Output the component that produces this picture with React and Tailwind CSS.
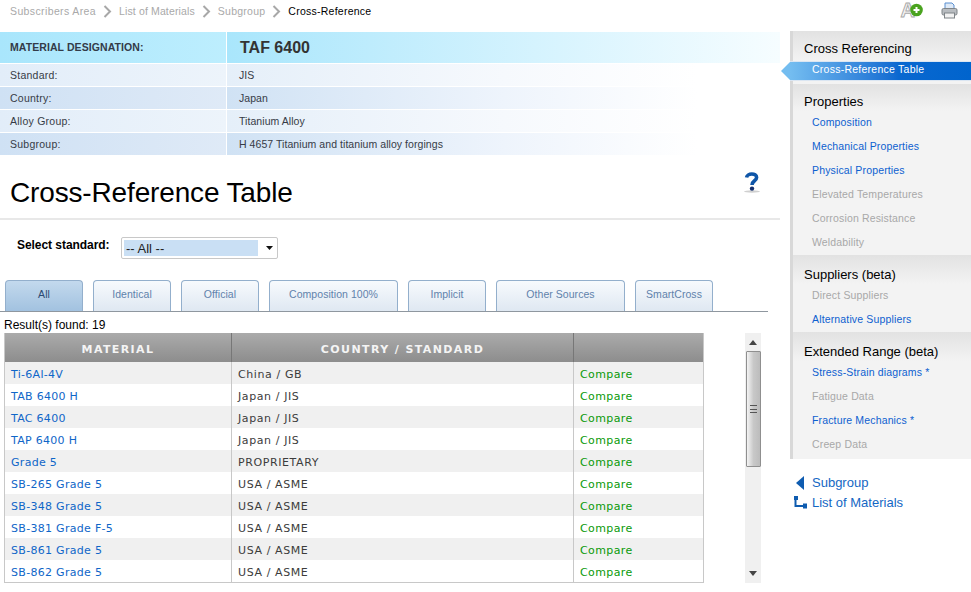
import React from "react";

const Crumb = () => (
  <svg width="9" height="13" viewBox="0 0 9 13" className="mx-[7px]">
    <path d="M1.5 1 L7 6.5 L1.5 12" fill="none" stroke="#a8a8a8" strokeWidth="2" />
  </svg>
);

const infoRows = [
  ["Standard:", "JIS", false],
  ["Country:", "Japan", true],
  ["Alloy Group:", "Titanium Alloy", false],
  ["Subgroup:", "H 4657 Titanium and titanium alloy forgings", true],
];

const tabs = [
  ["All", "w-[78px]"],
  ["Identical", "w-[78px]"],
  ["Official", "w-[78px]"],
  ["Composition 100%", "w-[129px]"],
  ["Implicit", "w-[78px]"],
  ["Other Sources", "w-[129px]"],
  ["SmartCross", "w-[78px]"],
];

const rows = [
  ["Ti-6Al-4V", "China / GB"],
  ["TAB 6400 H", "Japan / JIS"],
  ["TAC 6400", "Japan / JIS"],
  ["TAP 6400 H", "Japan / JIS"],
  ["Grade 5", "PROPRIETARY"],
  ["SB-265 Grade 5", "USA / ASME"],
  ["SB-348 Grade 5", "USA / ASME"],
  ["SB-381 Grade F-5", "USA / ASME"],
  ["SB-861 Grade 5", "USA / ASME"],
  ["SB-862 Grade 5", "USA / ASME"],
];

const NavHead = ({ children, className = "" }) => (
  <div className={`pl-[11px] text-[13px] leading-[18px] text-black bg-gradient-to-b from-[#e2e2e2] to-[#f3f3f3] ${className}`}>
    {children}
  </div>
);

const NavItem = ({ children, on }) => (
  <div className={`h-[24px] pl-[19px] text-[10.5px] leading-[22px] tracking-[0.15px] ${on ? "text-[#0d5fd0]" : "text-[#a8a8a8]"}`}>
    {children}
  </div>
);

export default function App() {
  return (
    <div className="flex h-[592px] w-[971px] overflow-hidden bg-white font-['Liberation_Sans',Arial,sans-serif]">
      <main className="w-[780px] shrink-0">
        <nav className="flex h-[32px] items-start pl-[10px] pt-[5px] text-[10.5px] leading-[13px] tracking-[0.25px] text-[#a9a9a9]">
          <span className="tracking-[0.38px]">Subscribers Area</span>
          <Crumb />
          <span className="tracking-[0.13px]">List of Materials</span>
          <Crumb />
          <span>Subgroup</span>
          <Crumb />
          <span className="text-black">Cross-Reference</span>
        </nav>

        <section>
          <div className="flex h-[32px] border-b border-white">
            <div className="w-[226px] bg-gradient-to-r from-[#a9e6fc] to-[#bdeefe] pl-[10px] text-[10.5px] font-bold leading-[30px] tracking-[0.08px] text-[#333b48]">
              MATERIAL DESIGNATION:
            </div>
            <div className="ml-px flex-1 bg-gradient-to-r from-[#a9e6fc] to-[#f6fdff] pl-[13px] text-[16px] font-bold leading-[31px] text-[#333333]">
              TAF 6400
            </div>
          </div>
          {infoRows.map(([a, b, dark]) => (
            <div key={a} className="flex h-[23px] border-b border-white text-[10.5px] leading-[22px] tracking-[0.25px] text-[#363b46]">
              <div className={`w-[226px] pl-[10px] bg-gradient-to-r ${dark ? "from-[#cfe1f4] to-[#dfeaf7]" : "from-[#e2edf9] to-[#edf4fb]"}`}>{a}</div>
              <div className={`ml-px flex-1 pl-[12px] tracking-[0.06px] bg-gradient-to-r ${dark ? "from-[#d0e2f4] via-[#eef4fc] via-50% to-white to-85%" : "from-[#e5eff9] via-[#f6f9fd] via-50% to-white to-85%"}`}>{b}</div>
            </div>
          ))}
        </section>

        <header className="flex h-[64px] items-start justify-between border-b-2 border-[#e8e8e8] pl-[10px] pr-[20px]">
          <h1 className="pt-[21px] text-[28px] font-normal leading-[32px] tracking-[-0.15px] text-black">Cross-Reference Table</h1>
          <svg width="16" height="21" viewBox="0 0 16 21" className="mt-[16px]">
            <ellipse cx="8" cy="19.5" rx="8" ry="1.2" fill="#d0d0d0" />
            <path d="M2.6 5.5 C3 1 12.6 0.6 12.6 5.6 C12.6 9 8 8.6 8 13" fill="none" stroke="#0f56a8" strokeWidth="3.6" />
            <circle cx="8" cy="16.6" r="2.2" fill="#15306e" />
          </svg>
        </header>

        <div className="flex h-[60px] items-start pl-[17px] pt-[17px]">
          <span className="w-[104px] pt-[1px] text-[12px] font-bold leading-[15px] tracking-[-0.05px] text-black">Select standard:</span>
          <div className="flex h-[22px] w-[157px] items-center rounded-[2px] border border-[#c8c8c8] pl-[2px]">
            <span className="h-[16px] w-[134px] bg-[#c9dff4] pl-[2px] text-[13px] leading-[17px] text-[#222222]">-- All --</span>
            <svg width="7" height="4" viewBox="0 0 7 4" className="ml-[8px]"><path d="M0 0 H7 L3.5 4 Z" fill="#111" /></svg>
          </div>
        </div>

        <div className="mr-[12px] flex h-[32px] items-end gap-[10px] border-b border-[#8f979f] pl-[5px]">
          {tabs.map(([t, w], i) => (
            <div
              key={t}
              className={`h-[31px] rounded-t-[4px] border border-b-0 border-[#93afcc] text-center text-[10.5px] leading-[26px] tracking-[0.05px] ${w} ${
                i === 0
                  ? "bg-gradient-to-b from-[#c3d9ed] to-[#a2c2e0] text-[#2b4a72]"
                  : "bg-gradient-to-b from-[#f7fafd] to-[#dfe8f2] text-[#5f82ab]"
              }`}
            >
              {t}
            </div>
          ))}
        </div>

        <div className="pl-[4px] pt-[6px] text-[12px] leading-[14px] text-black">Result(s) found: 19</div>

        <div className="flex items-start pl-[4px] pt-[1px]">
          <div className="w-[700px] border-x border-b border-[#c8c8c8] font-['DejaVu_Sans',Verdana,sans-serif] text-[11px]">
            <div className="flex h-[29px] bg-gradient-to-b from-[#ababab] to-[#8d8d8d] text-[11px] font-bold leading-[33px] tracking-[1.4px] text-[#f4f4f4]">
              <div className="w-[227px] border-r border-[#777777] text-center">MATERIAL</div>
              <div className="w-[342px] border-r border-[#777777] text-center">COUNTRY / STANDARD</div>
              <div className="flex-1" />
            </div>
            {rows.map(([m, c], i) => (
              <div key={m} className={`flex h-[22px] leading-[22px] ${i % 2 === 0 ? "bg-[#f0f0f0]" : "bg-white"}`}>
                <div className="w-[227px] border-r border-[#c8c8c8] pl-[6px] pt-[2px] tracking-[0.3px] text-[#0f66c8]">{m}</div>
                <div className="w-[342px] border-r border-[#c8c8c8] pl-[6px] pt-[2px] tracking-[0.6px] text-[#3c3c3c]">{c}</div>
                <div className="flex-1 pl-[6px] pt-[2px] tracking-[0.4px] text-[#0a9a0a]">Compare</div>
              </div>
            ))}
          </div>

          <div className="ml-[41px] flex h-[250px] w-[16px] flex-col items-center bg-[#f0f0f0]">
            <svg width="8" height="5" viewBox="0 0 8 5" className="mb-[6px] mt-[7px]"><path d="M4 0 L8 5 H0 Z" fill="#444" /></svg>
            <div className="flex h-[116px] w-[15px] items-center justify-center rounded-[1px] border border-[#8f8f8f] bg-gradient-to-r from-[#f4f4f4] via-[#c8c8c8] to-[#bcbcbc]">
              <div className="h-[8px] w-[7px] border-y border-[#555] bg-[linear-gradient(#555,#555)] bg-[length:100%_1px] bg-center bg-no-repeat" />
            </div>
            <svg width="8" height="5" viewBox="0 0 8 5" className="mt-auto mb-[7px]"><path d="M0 0 H8 L4 5 Z" fill="#444" /></svg>
          </div>
        </div>
      </main>

      <aside className="ml-[10px] w-[181px] shrink-0">
        <div className="flex h-[31px] items-start justify-end gap-[18px] pr-[13px]">
          <svg width="23" height="24" viewBox="0 0 23 24">
            <text x="0.5" y="17" fontFamily="Liberation Sans" fontWeight="700" fontSize="20" fill="#f4f4f4" stroke="#a9a9a9" strokeWidth="0.9">A</text>
            <circle cx="16.5" cy="10" r="6.3" fill="#4aa31f" />
            <path d="M16.5 7 V13 M13.5 10 H19.5" stroke="#fff" strokeWidth="2" />
          </svg>
          <svg width="17" height="17" viewBox="0 0 17 17" className="mt-[2px]">
            <path d="M4 7 V1 H11 L13 3 V7 Z" fill="#dfeaf7" stroke="#5b8fd0" />
            <rect x="1" y="6.5" width="15" height="6.5" rx="1.5" fill="#b8bcc0" stroke="#7f8488" />
            <rect x="3.5" y="11" width="10" height="5" fill="#f2f2f2" stroke="#7f8488" />
          </svg>
        </div>

        <div className="h-[428px] border-l-[3px] border-[#d8d8d8] bg-[#f3f3f3]">
          <NavHead className="h-[30px] pt-[9px]">Cross Referencing</NavHead>
          <div className="relative -ml-[3px] h-[20px] border-y border-[#dbe6f2] bg-gradient-to-r from-[#74bdf0] via-[#0a68d0] via-60% to-[#0064cd] pl-[22px] text-[10.5px] leading-[14px] tracking-[0.25px] text-white">
            <span className="absolute left-[-9px] top-[0px] h-0 w-0 border-y-[9px] border-r-[9px] border-y-transparent border-r-[#74bdf0]" />
            Cross-Reference Table
          </div>
          <NavHead className="mt-[3px] h-[27px] pt-[9px]">Properties</NavHead>
          <div>
            <NavItem on>Composition</NavItem>
            <NavItem on>Mechanical Properties</NavItem>
            <NavItem on>Physical Properties</NavItem>
            <NavItem>Elevated Temperatures</NavItem>
            <NavItem>Corrosion Resistance</NavItem>
            <NavItem>Weldability</NavItem>
          </div>
          <NavHead className="h-[29px] pt-[11px]">Suppliers (beta)</NavHead>
          <div>
            <NavItem>Direct Suppliers</NavItem>
            <NavItem on>Alternative Suppliers</NavItem>
          </div>
          <NavHead className="h-[29px] pt-[11px]">Extended Range (beta)</NavHead>
          <div>
            <NavItem on>Stress-Strain diagrams *</NavItem>
            <NavItem>Fatigue Data</NavItem>
            <NavItem on>Fracture Mechanics *</NavItem>
            <NavItem>Creep Data</NavItem>
          </div>
        </div>

        <div className="pt-[14px] text-[13px] leading-[20px] text-[#1467c4]">
          <div className="flex items-center">
            <svg width="22" height="20" viewBox="0 0 22 20"><path d="M6 10 L14 3 V17 Z" fill="#0f5cb0" /></svg>
            <span>Subgroup</span>
          </div>
          <div className="flex items-center">
            <svg width="22" height="20" viewBox="0 0 22 20">
              <path d="M5.5 5 V13 H14" fill="none" stroke="#0f5cb0" strokeWidth="2" />
              <rect x="4" y="3" width="4" height="4" fill="#0f5cb0" />
              <path d="M13 10.5 V15.5 L17 15.5 V10.5 Z" fill="#0f5cb0" />
            </svg>
            <span>List of Materials</span>
          </div>
        </div>
      </aside>
    </div>
  );
}
